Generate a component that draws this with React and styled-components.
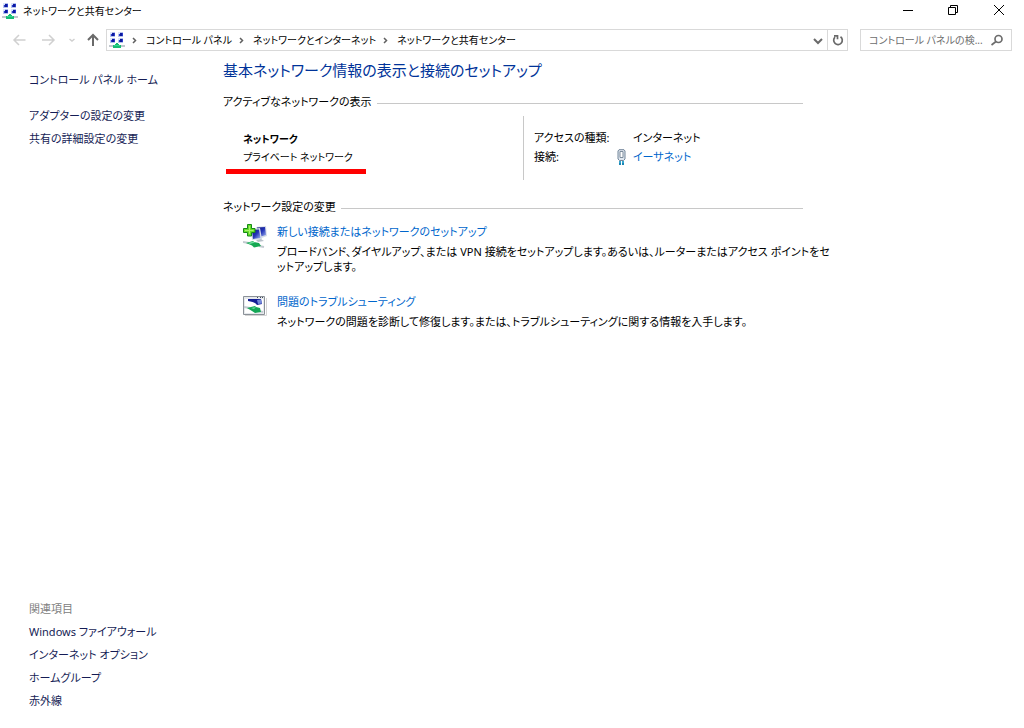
import React from "react";
import styled, { createGlobalStyle } from "styled-components";

const GlobalStyle = createGlobalStyle`
  * { box-sizing: border-box; }
  body {
    margin: 0;
    background: #fff;
    color: #000;
    font-family: "Noto Sans", "Noto Sans CJK JP", sans-serif;
    font-size: 11px;
    line-height: 16px;
    font-feature-settings: "palt", "kern";
  }
  button, input { font: inherit; font-feature-settings: inherit; }
  h1, h2, p, dl, dd, ul, ol { margin: 0; padding: 0; }
  ul, ol { list-style: none; }
  svg { flex: none; }
`;

const Window = styled.div`
  display: flex;
  flex-direction: column;
  min-height: 100vh;
`;

const TitleBar = styled.header`
  display: flex;
  align-items: center;
  height: 22px;
  padding-left: 2px;
`;

const WindowTitle = styled.span`
  flex: 1;
  margin-left: 5px;
  font-size: 10px;
  white-space: nowrap;
`;

const IconButton = styled.button`
  display: flex;
  align-items: center;
  justify-content: center;
  flex: none;
  width: ${(p) => p.$width}px;
  height: 20px;
  padding: 0;
  border: 0;
  background: none;
  color: ${(p) => p.$color || "#000"};
`;

const NavBar = styled.nav`
  display: flex;
  align-items: center;
  margin-top: 7px;
  padding: 0 12px 0 6px;
  font-size: 10px;
`;

const AddressBox = styled.div`
  display: flex;
  align-items: center;
  flex: 1;
  min-width: 0;
  height: 22px;
  margin-left: 2px;
  padding-left: 2px;
  border: 1px solid #d9d9d9;
`;

const Crumbs = styled.ol`
  display: flex;
  align-items: center;
  flex: 1;
  white-space: nowrap;
`;

const Crumb = styled.li`
  display: flex;
  align-items: center;
`;

const CrumbLink = styled.a`
  color: #000;
  text-decoration: none;
`;

const ReloadCell = styled.div`
  border-left: 1px solid #d9d9d9;
`;

const SearchBox = styled.label`
  display: flex;
  align-items: center;
  width: 152px;
  height: 22px;
  margin-left: 12px;
  padding: 0 6px 0 8px;
  border: 1px solid #d9d9d9;
  color: #6d6d6d;
`;

const SearchInput = styled.input`
  flex: 1;
  min-width: 0;
  padding: 0;
  border: 0;
  outline: 0;
  background: none;
  &::placeholder { color: #6d6d6d; opacity: 1; }
`;

const Body = styled.div`
  display: flex;
  flex: 1;
`;

const Sidebar = styled.aside`
  display: flex;
  flex-direction: column;
  justify-content: space-between;
  flex: none;
  width: 223px;
  padding: 17px 8px 16px 29px;
  line-height: 23px;
`;

const TaskList = styled.ul`
  margin-top: ${(p) => p.$gap || 0}px;
`;

const SideLink = styled.a`
  color: #151c55;
  text-decoration: none;
`;

const SideCaption = styled.p`
  color: #808080;
`;

const Main = styled.main`
  flex: 1;
  min-width: 0;
  max-width: 580px;
  padding-top: 9px;
`;

const PageTitle = styled.h1`
  color: #003399;
  font-size: 15px;
  font-weight: 400;
  line-height: 20px;
`;

const SectionHead = styled.div`
  display: flex;
  align-items: center;
  margin-top: ${(p) => p.$gap}px;
  &::after {
    content: "";
    flex: 1;
    height: 1px;
    margin: 2px 0 0 5px;
    background: #c8c8c8;
  }
`;

const SectionTitle = styled.h2`
  font-size: 11px;
  font-weight: 400;
`;

const NetworkRow = styled.section`
  display: flex;
  margin-top: 6px;
`;

const NetworkInfo = styled.div`
  width: 300px;
  padding: 14px 0 0 3px;
  font-size: 10px;
  line-height: 18px;
`;

const NetworkText = styled.p`
  padding-left: 17px;
  font-weight: ${(p) => (p.$strong ? 700 : 400)};
`;

const Marker = styled.div`
  width: 140px;
  height: 5px;
  margin-top: 3px;
  background: #ff0000;
`;

const Details = styled.dl`
  display: grid;
  grid-template-columns: 82px 17px 1fr;
  align-content: start;
  flex: 1;
  height: 64px;
  padding: 12px 0 0 10px;
  border-left: 1px solid #c8c8c8;
  line-height: 19px;
`;

const Value = styled.dd`
  grid-column: 3;
`;

const PlugCell = styled.dd`
  display: flex;
  align-items: center;
`;

const Link = styled.a`
  color: #0066cc;
  text-decoration: none;
`;

const Actions = styled.ul`
  display: flex;
  flex-direction: column;
  gap: 20px;
  margin-top: 9px;
`;

const Action = styled.li`
  display: flex;
  gap: 8px;
  padding-left: 20px;
  white-space: nowrap;
`;

const ActionText = styled.p`
  margin-top: 4px;
  line-height: 15px;
`;

function NetworkIcon() {
  return (
    <svg width="16" height="18" viewBox="0 0 16 18" shapeRendering="crispEdges" aria-hidden="true">
      {[[1, 1], [9, 1], [1, 7], [9, 7]].map(([x, y]) => (
        <g key={`${x}-${y}`}>
          <path fill="#b4c2ec" d={`M${x} ${y}h5v5h-5z`} />
          <path fill="#2a3ccc" d={`M${x + 1} ${y + 1}h4v3h-4z`} />
          <path fill="#dbe4fb" d={`M${x} ${y}h2v2h-2z`} />
          <path fill="#0c189c" d={`M${x + 2} ${y + 1}h2v3h-2z`} />
        </g>
      ))}
      <path fill="#c2c8ce" d="M0 14h16v2H0z" />
      <path fill="#18bd74" d="M7 12h2v1h1v1h2v3H4v-3h2v-1h1z" />
      <path fill="#35d890" d="M5 14h6v1H5z" />
    </svg>
  );
}

function Stroke({ size = 16, width = 1, d, children }) {
  return (
    <svg width={size} height={size} viewBox={`0 0 ${size} ${size}`} fill="none" stroke="currentColor" strokeWidth={width} aria-hidden="true">
      {d && <path d={d} />}
      {children}
    </svg>
  );
}

function Chevron() {
  return (
    <svg width="21" height="16" viewBox="0 0 21 16" fill="none" stroke="#606060" strokeWidth="1.5" aria-hidden="true">
      <path d="M8 6 10.500 8.500 8 11" />
    </svg>
  );
}

function PlugIcon() {
  return (
    <svg width="11" height="16" viewBox="0 0 10 16" aria-hidden="true">
      <path d="M1.500 2 2.500.7h5L8.500 2v8L7 11.500H3L1.500 10z" fill="#dfe6ee" stroke="#73869a" />
      <path d="M3.500 2.500h3v6h-3z" fill="#fff" stroke="#7c8c9c" />
      <path d="M2.500 12h2v4h-2zM5.500 12h2v4h-2z" fill="#1c86b4" />
      <path d="M3 12h1v2H3zM6 12h1v2H6z" fill="#52c8ec" />
    </svg>
  );
}

function SetupIcon() {
  return (
    <svg width="26" height="26" viewBox="0 0 26 26" aria-hidden="true">
      <defs>
        <linearGradient id="screen" x1="0" y1="0" x2="1" y2="1">
          <stop offset="0" stopColor="#101878" />
          <stop offset=".5" stopColor="#2434b8" />
          <stop offset="1" stopColor="#a5b8f2" />
        </linearGradient>
      </defs>
      <path d="M13 3 23 2l1 10-8 3z" fill="#d6dce6" />
      <path d="m14 3.500 8-.5 1 8-7 2z" fill="url(#screen)" />
      <path d="m8 5 9-1 2 11-10 1z" fill="#d6dce6" />
      <path d="m9 6 7-.5L17.500 14 10 15z" fill="url(#screen)" />
      <path d="m13 16 5-1 3 2-6 1z" fill="#b8c0c9" />
      <path d="m0 18 6 1M16 22l5 1" stroke="#c2cad0" strokeWidth="2" />
      <path d="m3 19 7-2 1 1 5 1 2 3-7 1.500-2-2z" fill="#15a852" />
      <path d="m5 19 5-1.500 2 1-5 1.500z" fill="#70dda0" />
      <path d="M4.500 .5h4v4h3.500v4H8.500V12h-4V8.500H.5v-4h4z" fill="#66dc28" stroke="#168a18" />
      <path d="M6.500 2v8M2 6.500h8.500" stroke="#a4f46c" />
    </svg>
  );
}

function TroubleshootIcon() {
  return (
    <svg width="26" height="26" viewBox="0 0 26 26" aria-hidden="true">
      <path d="M2 21.500h21.500V4" fill="none" stroke="#d5d5d5" />
      <path d="M.5 2.500h21v18H.5z" fill="#e6e9ec" stroke="#8b9198" />
      <path d="M2 5h18v14H2z" fill="#fff" />
      <path d="M14 3h1v1h-1zM17 3h1v1h-1zM19 3h1v1h-1z" fill="#404858" />
      <path d="M5 5h13l1 5-5 1c-2-3-5-3-9-4z" fill="#141e94" />
      <path d="m14 6 4-.5 1 4-4 .5z" fill="#7488da" />
      <path d="m1 13 6 1M15 17l5 1" stroke="#c2cad0" strokeWidth="2" />
      <path d="m4 14 8-2 1 1 4 1 1 4-6 1-3-2z" fill="#14a656" />
      <path d="m8 14 5-1-2 2z" fill="#6fe0a0" />
    </svg>
  );
}

const crumbs = ["コントロール パネル", "ネットワークとインターネット", "ネットワークと共有センター"];
const tasks = ["アダプターの設定の変更", "共有の詳細設定の変更"];
const related = ["Windows ファイアウォール", "インターネット オプション", "ホームグループ", "赤外線"];

function SideLinks({ items, gap }) {
  return (
    <TaskList $gap={gap}>
      {items.map((item) => (
        <li key={item}><SideLink href="#">{item}</SideLink></li>
      ))}
    </TaskList>
  );
}

export default function App() {
  return (
    <Window>
      <GlobalStyle />
      <TitleBar>
        <NetworkIcon />
        <WindowTitle>ネットワークと共有センター</WindowTitle>
        <IconButton $width={46} aria-label="最小化"><Stroke d="M3 7.500h10" /></IconButton>
        <IconButton $width={45} aria-label="元に戻す"><Stroke d="M2.500 4.500h7v7h-7zM4.500 4.500v-2h7v7h-2" /></IconButton>
        <IconButton $width={48} aria-label="閉じる"><Stroke d="m2 2 10 10M12 2 2 12" /></IconButton>
      </TitleBar>
      <NavBar>
        <IconButton $width={28} $color="#d0d0d0" aria-label="戻る"><Stroke width={1.5} d="M13.500 8H2.500M7 3 2 8l5 5" /></IconButton>
        <IconButton $width={28} $color="#d0d0d0" aria-label="進む"><Stroke width={1.5} d="M2 8h11.500M9 3l5 5-5 5" /></IconButton>
        <IconButton $width={20} $color="#d0d0d0" aria-label="最近の場所"><Stroke width={1.5} d="m5.500 7 2.500 2 2.500-2" /></IconButton>
        <IconButton $width={22} $color="#6a6a6a" aria-label="上へ"><Stroke width={2} d="M8 14V3M3 8l5-5 5 5" /></IconButton>
        <AddressBox>
          <NetworkIcon />
          <Crumbs>
            {crumbs.map((crumb) => (
              <Crumb key={crumb}>
                <Chevron />
                <CrumbLink href="#">{crumb}</CrumbLink>
              </Crumb>
            ))}
          </Crumbs>
          <IconButton $width={20} $color="#6a6a6a" aria-label="履歴"><Stroke width={2} d="m5 7 4 4 4-4" /></IconButton>
          <ReloadCell>
            <IconButton $width={19} $color="#6a6a6a" aria-label="更新">
              <Stroke width={1.7} d="M10.500 4.800A4.300 4.300 0 1 1 5 5.200M4 3.800h3.500v3.500" />
            </IconButton>
          </ReloadCell>
        </AddressBox>
        <SearchBox>
          <SearchInput type="text" aria-label="検索" placeholder="コントロール パネルの検..." />
          <Stroke width={1.7}><circle cx="9.500" cy="7" r="3.500" /><path d="M7 9.500 2.500 13" /></Stroke>
        </SearchBox>
      </NavBar>
      <Body>
        <Sidebar>
          <div>
            <SideLinks items={["コントロール パネル ホーム"]} />
            <SideLinks items={tasks} gap={13} />
          </div>
          <div>
            <SideCaption>関連項目</SideCaption>
            <SideLinks items={related} />
          </div>
        </Sidebar>
        <Main>
          <PageTitle>基本ネットワーク情報の表示と接続のセットアップ</PageTitle>
          <SectionHead $gap={14}><SectionTitle>アクティブなネットワークの表示</SectionTitle></SectionHead>
          <NetworkRow>
            <NetworkInfo>
              <NetworkText $strong>ネットワーク</NetworkText>
              <NetworkText>プライベート ネットワーク</NetworkText>
              <Marker />
            </NetworkInfo>
            <Details>
              <dt>アクセスの種類:</dt>
              <Value>インターネット</Value>
              <dt>接続:</dt>
              <PlugCell><PlugIcon /></PlugCell>
              <Value><Link href="#">イーサネット</Link></Value>
            </Details>
          </NetworkRow>
          <SectionHead $gap={19}><SectionTitle>ネットワーク設定の変更</SectionTitle></SectionHead>
          <Actions>
            <Action>
              <SetupIcon />
              <div>
                <Link href="#">新しい接続またはネットワークのセットアップ</Link>
                <ActionText>
                  ブロードバンド、ダイヤルアップ、または VPN 接続をセットアップします。あるいは、ルーターまたはアクセス ポイントをセ
                  <br />
                  ットアップします。
                </ActionText>
              </div>
            </Action>
            <Action>
              <TroubleshootIcon />
              <div>
                <Link href="#">問題のトラブルシューティング</Link>
                <ActionText>ネットワークの問題を診断して修復します。または、トラブルシューティングに関する情報を入手します。</ActionText>
              </div>
            </Action>
          </Actions>
        </Main>
      </Body>
    </Window>
  );
}
